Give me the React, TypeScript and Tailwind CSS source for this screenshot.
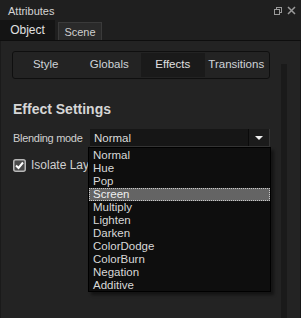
import React from 'react';

const modes = [
  'Normal',
  'Hue',
  'Pop',
  'Screen',
  'Multiply',
  'Lighten',
  'Darken',
  'ColorDodge',
  'ColorBurn',
  'Negation',
  'Additive',
];

const tabs = ['Style', 'Globals', 'Effects', 'Transitions'];

export default function App() {
  return (
    <div className="w-[301px] h-[318px] bg-[#1f1f1f] font-['Liberation_Sans',Arial,sans-serif] text-[11px] text-[#d4d4d4] flex flex-col overflow-hidden">
      {/* title bar */}
      <div className="h-[21px] flex items-center justify-between pl-2 pr-[5px] shrink-0">
        <span className="mt-[1px]">Attributes</span>
        <div className="flex items-center gap-[5px]">
          <svg width="8" height="8" viewBox="0 0 8 8">
            <rect x="2.5" y="0.5" width="5" height="5" fill="none" stroke="#9a9a9a" />
            <rect x="0.5" y="2.5" width="5" height="5" fill="#1f1f1f" stroke="#9a9a9a" />
          </svg>
          <svg width="9" height="9" viewBox="0 0 9 9">
            <path d="M1 1 L8 8 M8 1 L1 8" stroke="#9a9a9a" strokeWidth="1.5" />
          </svg>
        </div>
      </div>

      {/* object / scene tabs */}
      <div className="h-[20px] flex items-end gap-[3px] border-b border-[#0e0e0e] shrink-0">
        <div className="w-[55px] h-[20px] bg-[#141414] flex items-center justify-center text-[12px] text-[#e0e0e0]">
          Object
        </div>
        <div className="w-[44px] h-[18px] bg-[#2a2a2a] border border-b-0 border-[#3a3a3a] flex items-end justify-center text-[#cfcfcf]">
          Scene
        </div>
      </div>

      {/* panel */}
      <div className="flex-1 bg-[#232323] border-l border-[#1a1a1a] flex">
        <div className="w-[280px] pl-[11px] pt-[10px]">
          <div className="w-[258px] h-[28px] border border-[#0f0f0f] rounded-[3px] flex p-[1px]">
            {tabs.map((t) => (
              <div
                key={t}
                className={`flex-1 flex items-center justify-center text-[11.5px] ${
                  t === 'Effects' ? 'bg-[#1a1a1a] text-[#e0e0e0]' : 'text-[#cfd3d8]'
                }`}
              >
                {t}
              </div>
            ))}
          </div>

          <div className="mt-[22px] pl-[1px] text-[14px] font-bold text-[#d6d6d6] leading-[16px]">
            Effect Settings
          </div>

          <div className="mt-[12px] flex items-center h-[18px]">
            <span className="w-[78px] pl-[1px] tracking-[-0.3px] text-[#d0d0d0]">Blending mode</span>
            <div className="relative w-[180px] h-[18px] bg-[#161616] border-r border-b border-[#353535] flex">
              <span className="flex-1 pl-[4px] leading-[18px] text-[11.5px] text-[#dcdcdc]">Normal</span>
              <div className="w-[21px] border-l border-[#0a0a0a] bg-[#1b1b1b] flex items-center justify-center">
                <svg width="8" height="4" viewBox="0 0 8 4">
                  <polygon points="0,0 8,0 4,4" fill="#f0f0f0" />
                </svg>
              </div>

              {/* open list */}
              <div className="absolute left-[-2px] top-[18px] w-[183px] h-[145px] bg-[#0e0e0e] border border-[#000] shadow-[3px_3px_3px_rgba(0,0,0,0.45)] z-10 flex flex-col pt-[1px]">
                {modes.map((m) => (
                  <div
                    key={m}
                    className={`h-[13px] pl-[3px] text-[11.5px] ${
                      m === 'Screen'
                        ? 'bg-[#646464] border border-dotted border-[#c8c8c8] text-[#f0f0f0] leading-[11px]'
                        : 'text-[#d8d8d8] pl-[4px] leading-[13px]'
                    }`}
                  >
                    {m}
                  </div>
                ))}
              </div>
            </div>
          </div>

          <div className="mt-[9px] pl-[1px] flex items-center gap-[5px]">
            <svg width="13" height="13" viewBox="0 0 13 13">
              <rect x="0.75" y="0.75" width="11.5" height="11.5" rx="2" fill="#4a4a4a" stroke="#b8b8b8" strokeWidth="1.5" />
              <path d="M3 6.5 L5.5 9 L10 3.5" fill="none" stroke="#ffffff" strokeWidth="2" />
            </svg>
            <span className="w-[57px] overflow-hidden whitespace-nowrap text-[12px] text-[#d0d0d0]">Isolate Layer</span>
          </div>
        </div>

        {/* scroll track */}
        <div className="w-[6px] mt-[23px] bg-[#1a1a1a]" />
        <div className="flex-1" />
        <div className="w-[1px] bg-[#161616]" />
      </div>
    </div>
  );
}
